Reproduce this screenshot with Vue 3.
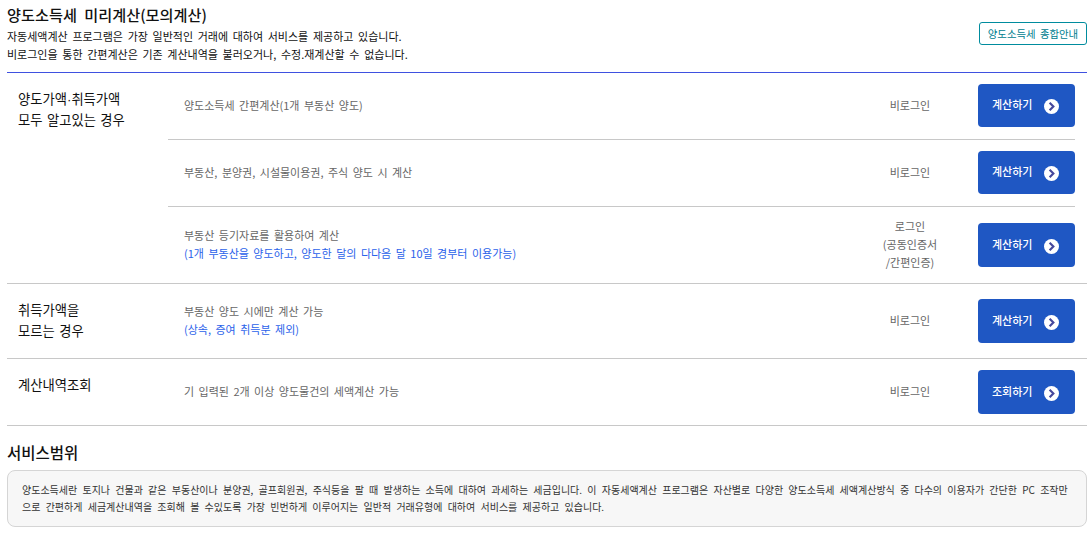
<script setup>
const groups = [
  {
    label: ['양도가액·취득가액', '모두 알고있는 경우'],
    cls: 'g1',
    rows: [
      { desc: '양도소득세 간편계산(1개 부동산 양도)', status: ['비로그인'], btn: '계산하기', h: 'h67' },
      { desc: '부동산, 분양권, 시설물이용권, 주식 양도 시 계산', status: ['비로그인'], btn: '계산하기', h: 'h67' },
      { desc: '부동산 등기자료를 활용하여 계산', note: '(1개 부동산을 양도하고, 양도한 달의 다다음 달 10일 경부터 이용가능)', status: ['로그인', '(공동인증서', '/간편인증)'], btn: '계산하기', h: 'h77' },
    ],
  },
  {
    label: ['취득가액을', '모르는 경우'],
    cls: 'g2',
    rows: [
      { desc: '부동산 양도 시에만 계산 가능', note: '(상속, 증여 취득분 제외)', status: ['비로그인'], btn: '계산하기', h: 'h75' },
    ],
  },
  {
    label: ['계산내역조회'],
    cls: 'g3',
    rows: [
      { desc: '기 입력된 2개 이상 양도물건의 세액계산 가능', status: ['비로그인'], btn: '조회하기', h: 'h66' },
    ],
  },
]
</script>

<template>
  <div class="page">
    <header class="head">
      <div class="head-text">
        <h1>양도소득세 미리계산(모의계산)</h1>
        <p>자동세액계산 프로그램은 가장 일반적인 거래에 대하여 서비스를 제공하고 있습니다.</p>
        <p>비로그인을 통한 간편계산은 기존 계산내역을 불러오거나, 수정.재계산할 수 없습니다.</p>
      </div>
      <a class="guide">양도소득세 종합안내</a>
    </header>

    <section class="table">
      <div v-for="g in groups" :key="g.label[0]" class="group" :class="g.cls">
        <div class="label">
          <div v-for="l in g.label" :key="l">
            <template v-for="(part, i) in l.split('·')" :key="part"><span v-if="i" class="dot">·</span>{{ part }}</template>
          </div>
        </div>
        <div class="rows">
          <div v-for="r in g.rows" :key="r.desc" class="row" :class="r.h">
            <div class="desc">
              <div>{{ r.desc }}</div>
              <div v-if="r.note" class="note">{{ r.note }}</div>
            </div>
            <div class="status">
              <div v-for="s in r.status" :key="s">{{ s }}</div>
            </div>
            <button class="btn" type="button">
              <span class="btn-text">{{ r.btn }}</span>
              <svg class="chev" width="15" height="15" viewBox="0 0 16 16" aria-hidden="true">
                <circle cx="8" cy="8" r="8" fill="#fff" />
                <path d="M6 4 L10 8 L6 12" fill="none" stroke="#46489c" stroke-width="2.3" />
              </svg>
            </button>
          </div>
        </div>
      </div>
    </section>

    <h2>서비스범위</h2>
    <div class="box">양도소득세란 토지나 건물과 같은 부동산이나 분양권, 골프회원권, 주식등을 팔 때 발생하는 소득에 대하여 과세하는 세금입니다. 이 자동세액계산 프로그램은 자산별로 다양한 양도소득세 세액계산방식 중 다수의 이용자가 간단한 PC 조작만으로 간편하게 세금계산내역을 조회해 볼 수있도록 가장 빈번하게 이루어지는 일반적 거래유형에 대하여 서비스를 제공하고 있습니다.</div>
  </div>
</template>

<style>
html, body { margin: 0; background: #fff; }
</style>

<style scoped>
.page {
  width: 1080px;
  margin-left: 7px;
  font-family: "Noto Sans CJK KR", "Noto Sans", sans-serif;
  color: #222;
}
.head {
  height: 72px;
  display: flex;
  justify-content: space-between;
  align-items: flex-start;
  border-bottom: 1px solid #3f51e0;
}
h1 {
  margin: 3px 0 2px;
  font-size: 15.2px;
  line-height: 22px;
  font-weight: 500;
  word-spacing: 4px;
  color: #111;
}
.head-text p {
  margin: 0;
  font-size: 11px;
  line-height: 18px;
  word-spacing: 2.2px;
  color: #111;
}
.guide {
  margin-top: 22px;
  box-sizing: border-box;
  width: 108px;
  height: 23px;
  border: 1px solid #008c9e;
  border-radius: 3px;
  color: #00808f;
  font-size: 10.4px;
  word-spacing: 2px;
  line-height: 21px;
  text-align: center;
}
.group {
  display: flex;
  border-bottom: 1px solid #c8c8c8;
}
.label {
  width: 150px;
  padding-left: 11px;
  font-size: 13.3px;
  line-height: 21px;
  word-spacing: 1.5px;
  color: #111;
}
.dot { font-family: "Liberation Sans", sans-serif; }
.g1 .label { padding-top: 16px; line-height: 20px; }
.g2 .label { padding-top: 15px; }
.g3 .label { padding-top: 15px; }
.rows { flex: 1; min-width: 0; padding-right: 12px; }
.row {
  display: flex;
  align-items: center;
  box-sizing: border-box;
  border-bottom: 1px solid #c8c8c8;
}
.row:last-child { border-bottom: 0; }
.h67 { height: 67px; }
.h77 { height: 76px; }
.h75 { height: 74px; }
.h66 { height: 66px; }
.desc {
  flex: 1;
  padding-left: 16px;
  padding-bottom: 2px;
  font-size: 11px;
  line-height: 18px;
  word-spacing: 2px;
  color: #666;
}
.note { color: #2b62ea; }
.status {
  width: 100px;
  margin-right: 18px;
  padding-bottom: 2px;
  text-align: center;
  font-size: 11px;
  line-height: 18px;
  color: #666;
}
.btn {
  width: 97px;
  height: 44px;
  flex: none;
  padding: 0 0 0 14px;
  display: flex;
  align-items: center;
  gap: 11.5px;
  background: #1f57c3;
  border: 0;
  border-radius: 4px;
  color: #fff;
  font-family: inherit;
  font-size: 11px;
  font-weight: 500;
}
.h67 .btn { height: 43px; margin-bottom: 1px; }
.btn-text { position: relative; top: -1px; }
.h67 .btn-text { top: -2px; }
.chev { flex: none; position: relative; top: 1px; }
h2 {
  margin: 16px 0 0;
  font-size: 15.5px;
  line-height: 20px;
  font-weight: 500;
  color: #111;
}
.box {
  margin-top: 8px;
  box-sizing: border-box;
  height: 57px;
  padding: 10px 14px;
  background: #f7f7f7;
  border: 1px solid #d5d5d5;
  border-radius: 8px;
  font-size: 10px;
  line-height: 17px;
  word-spacing: 3px;
  color: #333;
}
</style>
